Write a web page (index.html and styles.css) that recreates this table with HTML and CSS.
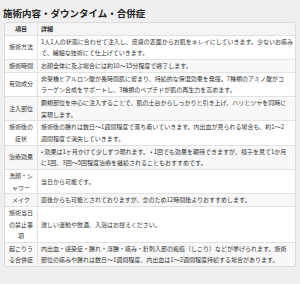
FILE: index.html
```html
<!DOCTYPE html>
<html lang="ja">
<head>
<meta charset="utf-8">
<link rel="stylesheet" href="styles.css">
</head>
<body>
<div class="page">
  <h2 class="title">施術内容・ダウンタイム・合併症</h2>
  <table class="info">
    <thead>
      <tr><th class="label">項目</th><th class="detail">詳細</th></tr>
    </thead>
    <tbody>
      <tr><td class="label">施術方法</td><td class="detail">1人1人の状態に合わせて注入し、皮膚の表面からお肌をキレイにしていきます。少ないお痛み<br>で、繊細な技術にて仕上げていきます。</td></tr>
      <tr><td class="label">施術時間</td><td class="detail">お顔全体に及ぶ場合には約10〜15分程度で終了します。</td></tr>
      <tr><td class="label">有効成分</td><td class="detail">非架橋ヒアルロン酸が長時間肌に留まり、持続的な保湿効果を発揮。7種類のアミノ酸がコ<br>ラーゲン合成をサポートし、3種類のペプチドが肌の再生力を高めます。</td></tr>
      <tr><td class="label">注入部位</td><td class="detail">額頬部位を中心に注入することで、肌の土台からしっかりと引き上げ、ハリとツヤを同時に<br>実現します。</td></tr>
      <tr><td class="label">施術後の症状</td><td class="detail">施術後の腫れは数日〜1週間程度で落ち着いていきます。内出血が見られる場合も、約1〜2<br>週間程度で消失していきます。</td></tr>
      <tr><td class="label">治療効果</td><td class="detail">• 効果は1ヶ月かけて少しずつ現れます。 • 1回でも効果を期待できますが、様子を見て1か月<br>に1回、3回〜5回程度治療を継続されることもおすすめです。</td></tr>
      <tr><td class="label">洗顔・シャワー</td><td class="detail">当日から可能です。</td></tr>
      <tr><td class="label">メイク</td><td class="detail">直後からも可能とされておりますが、念のため12時間後よりおすすめします。</td></tr>
      <tr><td class="label">施術当日の禁止事項</td><td class="detail">激しい運動や飲酒、入浴はお控えください。</td></tr>
      <tr><td class="label">起こりうる合併症</td><td class="detail">内出血・感染症・腫れ・浮腫・痛み・針刺入部の瘢痕（しこり）などが挙げられます。施術<br>部位の痛みや腫れは数日〜1週間程度、内出血は1〜2週間程度持続する場合があります。</td></tr>
    </tbody>
  </table>
</div>
</body>
</html>
```

FILE: styles.css
```css
html, body {
  margin: 0;
  padding: 0;
  background: #efefef;
}
.page {
  padding: 7px 4px 0 4px;
  font-family: "Noto Sans CJK JP", "Noto Sans", sans-serif;
  color: #333;
}
.title {
  margin: 0 0 3px -1px;
  font-size: 9.5px;
  line-height: 12px;
  font-weight: bold;
  color: #222;
}
.info {
  width: 292px;
  table-layout: fixed;
  border-collapse: separate;
  border-spacing: 0;
  background: #fff;
  border: 1px solid #dcdcdc;
  border-radius: 2px;
  font-size: 6px;
  line-height: 11.65px;
}
.info th, .info td {
  padding: 0;
  border-bottom: 1px solid #e2e2e2;
  vertical-align: middle;
}
.info tr:last-child td {
  border-bottom: none;
}
.info .label {
  width: 24px;
  padding: 0 4px;
  text-align: center;
  border-right: 1px solid #e2e2e2;
}
.info .detail {
  padding: 0 3px;
  text-align: left;
  white-space: nowrap;
  overflow: hidden;
}
.info thead th {
  background: #f4f4f4;
  font-weight: bold;
}
.info tbody tr:nth-child(even) td {
  background: #f8f8f8;
}
```
